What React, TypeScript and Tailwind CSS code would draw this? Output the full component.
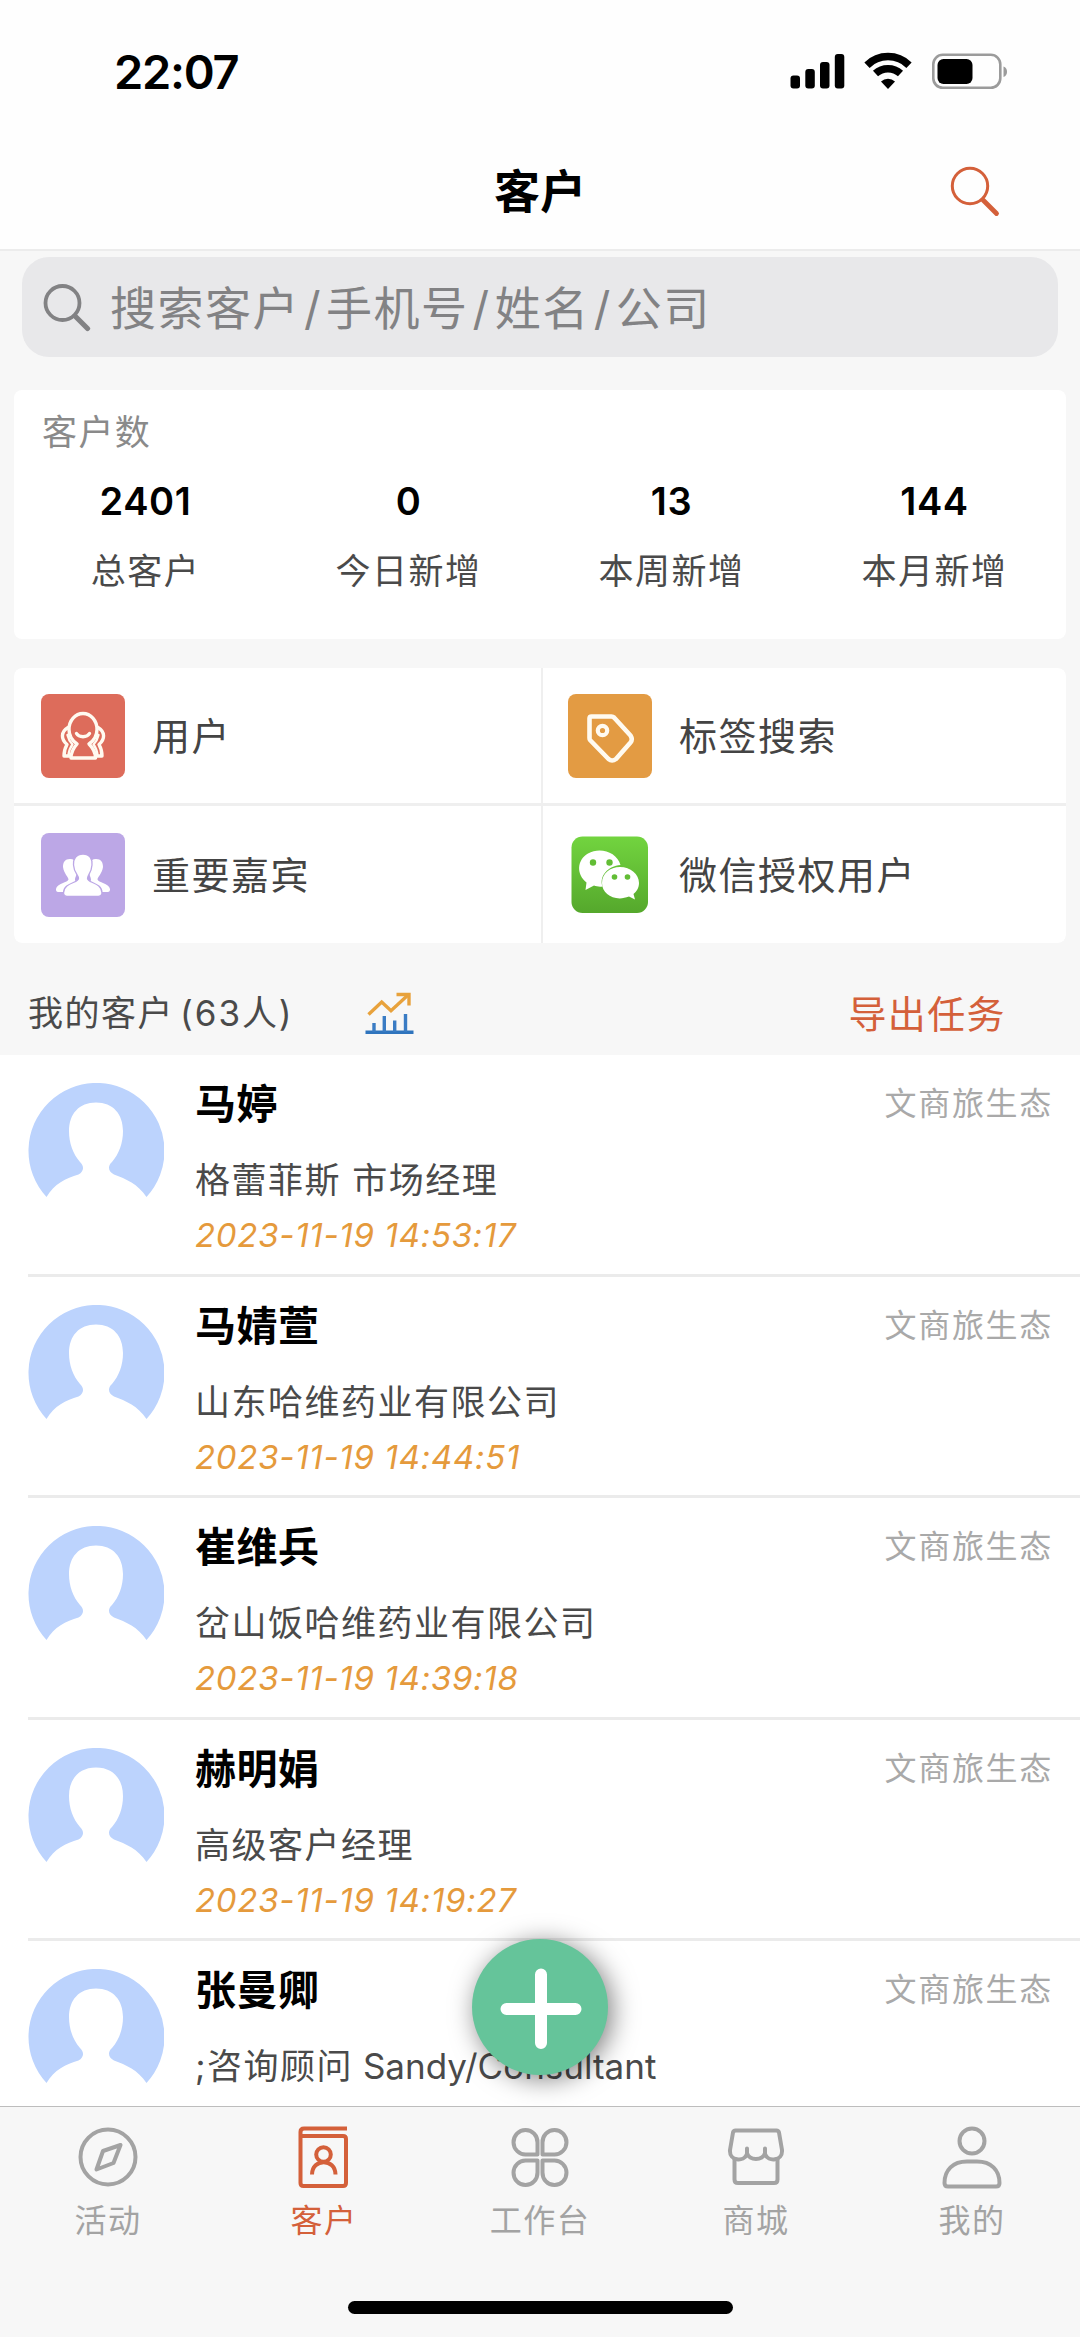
import React, { FC, ReactNode } from 'react';

interface Customer {
  name: string;
  info: string;
  latin?: string;
  time: string;
  tag: string;
}

const stats = [
  { value: '2401', label: '总客户' },
  { value: '0', label: '今日新增' },
  { value: '13', label: '本周新增' },
  { value: '144', label: '本月新增' },
];

const customers: Customer[] = [
  { name: '马婷', info: '格蕾菲斯 市场经理', time: '2023-11-19 14:53:17', tag: '文商旅生态' },
  { name: '马婧萱', info: '山东哈维药业有限公司', time: '2023-11-19 14:44:51', tag: '文商旅生态' },
  { name: '崔维兵', info: '岔山饭哈维药业有限公司', time: '2023-11-19 14:39:18', tag: '文商旅生态' },
  { name: '赫明娟', info: '高级客户经理', time: '2023-11-19 14:19:27', tag: '文商旅生态' },
  { name: '张曼卿', info: ';咨询顾问', latin: ' Sandy/Consultant', time: '', tag: '文商旅生态' },
];

const StatusBar: FC = () => (
  <div className="flex h-[142px] shrink-0 items-start justify-between pr-[71px] pl-[114px]">
    <span className="mt-[42px] text-[47px] leading-[60px] font-semibold tracking-[-1.3px] text-black">22:07</span>
    <svg className="mt-[52px]" width="220" height="40" viewBox="0 0 220 40">
      <g transform="translate(1.5 2)">
        <rect x="0" y="21.5" width="9.5" height="13" rx="3" />
        <rect x="14.8" y="15" width="9.5" height="19.5" rx="3" />
        <rect x="29.5" y="8" width="9.5" height="26.5" rx="3" />
        <rect x="44.3" y="0" width="9.5" height="34.5" rx="3" />
      </g>
      <g fill="none" stroke="#000" strokeWidth="7.5">
        <path d="M78 13.2 A30 30 0 0 1 120 13.2" />
        <path d="M86.5 21.6 A18.5 18.5 0 0 1 111.5 21.6" />
      </g>
      <path d="M99 37 L92 29.5 A10.5 10.5 0 0 1 106 29.5 Z" />
      <rect x="144.3" y="2.8" width="67" height="33" rx="9.5" fill="none" stroke="#9b9b9b" strokeWidth="2.6" />
      <rect x="148.5" y="7" width="35" height="25" rx="6" />
      <path d="M214.5 14.5 C219.2 16 219.2 23.5 214.5 25 Z" fill="#9b9b9b" />
    </svg>
  </div>
);

const NavBar: FC = () => (
  <div className="relative flex h-[109px] shrink-0 items-center justify-center border-b-2 border-[#ececec]">
    <h1 className="-mt-[10px] text-[46px] leading-none font-bold text-black">客户</h1>
    <svg className="absolute top-[22px] left-[949px]" width="54" height="54" viewBox="0 0 54 54" fill="none" stroke="#d4603a">
      <circle cx="21" cy="22" r="17.7" strokeWidth="3" />
      <path d="M34 36 L47.5 49.5" strokeWidth="4.8" strokeLinecap="round" />
    </svg>
  </div>
);

const SearchBox: FC = () => (
  <div className="mx-[22px] mt-[6px] flex h-[100px] shrink-0 items-center rounded-[27px] bg-[#e8e8ea] pl-[21px] text-[#828284]">
    <svg width="50" height="50" viewBox="0 0 50 50" fill="none" stroke="#828284">
      <circle cx="19.5" cy="21" r="17" strokeWidth="3.8" />
      <path d="M32 34 L44.5 46.5" strokeWidth="5.2" strokeLinecap="round" />
    </svg>
    <span className="mt-[2px] ml-[17px] text-[46px] leading-none tracking-[1.5px]">
      搜索客户<i className="mx-[4px] not-italic">/</i>手机号<i className="mx-[4px] not-italic">/</i>姓名
      <i className="mx-[4px] not-italic">/</i>公司
    </span>
  </div>
);

const StatsCard: FC = () => (
  <div className="mx-[14px] mt-[33px] h-[249px] shrink-0 rounded-[8px] bg-white">
    <div className="pt-[18px] pl-[28px] text-[35px] leading-[48px] tracking-[1.4px] text-[#8a8a8a]">客户数</div>
    <div className="grid grid-cols-4 text-center">
      {stats.map((s) => (
        <div key={s.label} className="flex flex-col">
          <span className="mt-[21px] text-[38px] leading-[48px] font-semibold tracking-[0.6px] text-black">{s.value}</span>
          <span className="mt-[22px] text-[35px] leading-[48px] tracking-[1.5px] text-[#4a4a4a]">{s.label}</span>
        </div>
      ))}
    </div>
  </div>
);

const UserIcon: FC = () => (
  <svg width="84" height="84" viewBox="0 0 84 84" fill="none" stroke="#fffaf0" strokeWidth="3.4" strokeLinejoin="round" strokeLinecap="round">
    <rect width="84" height="84" rx="8" fill="#dd6c5b" stroke="none" />
    <path d="M36 50 C31 46.5 28 42 28 35.5 A14 16 0 0 1 56 35.5 C56 42 53 46.5 48 50 C52 54 54.5 59 54.5 64 H30 C30 59 32.5 54 36 50" />
    <path d="M35.5 39.5 C38 43.8 46 43.8 48.5 39.5" />
    <path d="M27 33.5 C19.5 38 20 45.5 26 50.5 C24 54 23 58 23 62 H29" />
    <path d="M57 33.5 C64.5 38 64 45.5 58 50.5 C60 54 61 58 61 62 H55" />
    <path d="M26.5 41 C27.5 45.5 29.5 48.5 31.5 50.5 C29.5 53 28 57 27.5 61 M57.5 41 C56.5 45.5 54.5 48.5 52.5 50.5 C54.5 53 56 57 56.5 61" strokeWidth="2.4" />
  </svg>
);

const TagIcon: FC = () => (
  <svg width="84" height="84" viewBox="0 0 84 84" fill="none" stroke="#fffaf0" strokeWidth="4.6" strokeLinejoin="round">
    <rect width="84" height="84" rx="8" fill="#e39b43" stroke="none" />
    <path d="M23.5 22.5 H43.5 Q45 22.5 46 23.5 L62.5 41.5 Q65 45.5 62.5 48.5 L48 65 Q44 68 40.5 65 L22 46 Q21.5 45.5 21.5 44 V24.5 Q21.5 22.5 23.5 22.5 Z" />
    <circle cx="34.5" cy="36.5" r="4.7" strokeWidth="4.2" />
  </svg>
);

const GuestIcon: FC = () => (
  <svg width="84" height="84" viewBox="0 0 84 84" fill="#fff">
    <rect width="84" height="84" rx="8" fill="#bca7e6" />
    <path d="M29 26 C36 26 37 33 36 39 C35.5 43 34 44 34 47 C34 50 46 51 46 59 H18 C15 59 15 57.5 15 56 C16 50 27 49.5 27.5 46.5 C27.5 44 23 41 22 34 C22 29 24 26 29 26 Z" />
    <path d="M55 26 C48 26 47 33 48 39 C48.5 43 50 44 50 47 C50 50 38 51 38 59 H66 C69 59 69 57.5 69 56 C68 50 57 49.5 56.5 46.5 C56.5 44 61 41 62 34 C62 29 60 26 55 26 Z" />
    <path d="M42 21 C49 21 51.5 26.5 51 32 C50.5 40 46.5 42 46.5 45.5 C46.5 50 61 49.5 61 60 C61 63 58 63.5 55 63.5 H28 C25 63.5 22.5 63 22.5 60 C22.5 49.5 37.5 50 37.5 45.5 C37.5 42 33 40 32.5 32 C32 26.5 35 21 42 21 Z" stroke="#bca7e6" strokeWidth="1.3" />
  </svg>
);

const WechatIcon: FC = () => (
  <svg width="84" height="84" viewBox="0 0 84 84">
    <defs>
      <linearGradient id="wechat" x1="0" y1="0" x2="0" y2="1">
        <stop offset="0" stopColor="#72d43f" />
        <stop offset="1" stopColor="#55a82c" />
      </linearGradient>
    </defs>
    <rect x="3.5" y="3.5" width="76.5" height="76.5" rx="11" fill="url(#wechat)" />
    <path d="M18.5 49.5 C8 41 9 27 20 20.5 C32 13.5 49 19 52.5 32 C40 33 31 43 34.5 53.5 C31 54 28.5 53.3 26 52.5 L17.5 57 Z" fill="#fff" />
    <path d="M34 50 C34 40.5 42 34 52 34 C62.5 34 71 41 71 50 C71 55 68.5 58.5 65.5 61 L67 66.5 L61 63.6 C47 69 34 61.5 34 50 Z" fill="#fff" />
    <g fill="#62bd35">
      <circle cx="25" cy="29.5" r="3.2" />
      <circle cx="41.5" cy="29.5" r="3.2" />
      <circle cx="46.5" cy="44" r="2.8" />
      <circle cx="59.5" cy="44" r="2.8" />
    </g>
  </svg>
);

const MenuItem: FC<{ icon: ReactNode; label: string }> = ({ icon, label }) => (
  <div className="flex items-center bg-white pt-px pl-[25px] text-[38px] leading-none tracking-[1.5px] text-[#444] odd:pl-[27px]">
    {icon}
    <span className="ml-[27px]">{label}</span>
  </div>
);

const MenuGrid: FC = () => (
  <div className="mx-[14px] mt-[29px] grid h-[275px] shrink-0 grid-cols-[527px_523px] grid-rows-[135px_137px] gap-x-[2px] gap-y-[3px] overflow-hidden rounded-[8px] bg-[#efefef]">
    <MenuItem icon={<UserIcon />} label="用户" />
    <MenuItem icon={<TagIcon />} label="标签搜索" />
    <MenuItem icon={<GuestIcon />} label="重要嘉宾" />
    <MenuItem icon={<WechatIcon />} label="微信授权用户" />
  </div>
);

const ListHeader: FC = () => (
  <div className="flex h-[112px] shrink-0 items-center pt-[29px] pr-[74px] pl-[28px]">
    <span className="w-[337px] text-[35px] leading-none tracking-[1.5px] text-[#4a4a4a]">
      我的客户<i className="ml-[6px] tracking-[2px] not-italic">(63</i>人<i className="not-italic">)</i>
    </span>
    <svg width="50" height="44" viewBox="0 0 50 44" fill="none" strokeWidth="3.4">
      <path d="M3.5 22.5 L16.7 10 L26 18.7 L42.5 3.5" stroke="#e8a23c" />
      <path d="M31.5 2.5 H44 V13.5" stroke="#e8a23c" />
      <path d="M0.5 40.3 H48.5" stroke="#2f74bd" />
      <path d="M9 31 V40 M19.3 24 V40 M29.7 28.5 V40 M40.5 22 V40" stroke="#3a7cc4" />
    </svg>
    <span className="ml-auto text-[38px] leading-none tracking-[1.4px] text-[#d4603a]">导出任务</span>
  </div>
);

const Avatar: FC = () => (
  <svg className="mt-[28px] shrink-0" width="136" height="136" viewBox="0 0 136 136">
    <path
      fill="#bcd3fd"
      d="M18.5 114 A68 68 0 1 1 118.5 114 C110 101 98 96 86 91.5 C80 88.5 79.5 83 84 79 C91 71 95 60 95 48 C95 31 85 19.5 68 19.5 C51 19.5 41 31 41 48 C41 60 45 71 52 79 C56.5 83 56 88.5 50.5 91.5 C38 95 26 101 18.5 114 Z"
    />
  </svg>
);

const CustomerRow: FC<{ customer: Customer }> = ({ customer }) => (
  <div className="ml-[28px] flex h-[221.5px] shrink-0 border-b-3 border-[#ebebeb]">
    <Avatar />
    <div className="ml-[31px] flex flex-col">
      <span className="mt-[21px] text-[41px] leading-[56px] font-bold tracking-[0.5px] text-black">{customer.name}</span>
      <span className="mt-[24px] text-[35px] leading-[48px] tracking-[1.5px] whitespace-nowrap text-[#4a4a4a]">
        {customer.info}
        {customer.latin && <i className="tracking-normal not-italic">{customer.latin}</i>}
      </span>
      <span className="mt-[9px] text-[33px] leading-[44px] tracking-[0.7px] text-[#e59a3c] italic">{customer.time}</span>
    </div>
    <span className="mt-[27px] mr-[27px] ml-auto text-[32px] leading-[44px] tracking-[1.7px] text-[#a9a9a9]">{customer.tag}</span>
  </div>
);

const tabs: { label: string; active?: boolean; icon: ReactNode }[] = [
  {
    label: '活动',
    icon: (
      <>
        <circle cx="32" cy="32" r="27.5" />
        <path d="M44.5 20 L37.5 38 L20.5 44.5 L27 26 Z" />
      </>
    ),
  },
  {
    label: '客户',
    active: true,
    icon: (
      <>
        <path d="M55 3.5 H12 Q8.5 3.5 8.5 7 V58 Q8.5 61 11.5 61 H51 Q54 61 54 58 V14 Q54 11 51 11 H9" />
        <circle cx="31.5" cy="29.5" r="7.3" />
        <path d="M20 49.5 C20 33 43.5 33 43.5 49.5" />
      </>
    ),
  },
  {
    label: '工作台',
    icon: (
      <>
        <path d="M29.5 29.5 H18 A12 12.3 0 1 1 29.5 17.5 Z" />
        <path d="M34.5 29.5 H46 A12 12.3 0 1 0 34.5 17.5 Z" />
        <path d="M29.5 35.5 H18 A12 12.3 0 1 0 29.5 47.5 Z" />
        <path d="M34.5 35.5 H46 A12 12.3 0 1 1 34.5 47.5 Z" />
      </>
    ),
  },
  {
    label: '商城',
    icon: (
      <>
        <path d="M11.5 5.5 H52.5 Q54.5 5.5 55 7.5 L58 25 C59 36 44 37.5 41 29 V23.5 V28 C39 36 25 36 23 28 V23.5 V29 C20 37.5 5 36 6 25 L9 7.5 Q9.5 5.5 11.5 5.5 Z" />
        <path d="M10.5 34 V54.5 Q10.5 58 14 58 H50 Q53.5 58 53.5 54.5 V34" />
      </>
    ),
  },
  {
    label: '我的',
    icon: (
      <>
        <circle cx="32" cy="16" r="12.5" />
        <path d="M27 36.5 H37 C51 36.5 59.5 45 59.5 58 Q59.5 61.5 56 61.5 H8 Q4.5 61.5 4.5 58 C4.5 45 13 36.5 27 36.5 Z" />
      </>
    ),
  },
];

const TabBar: FC = () => (
  <div className="mt-auto flex h-[231px] shrink-0 flex-col items-center border-t border-[#bdbdbd] bg-[#f7f7f7]">
    <div className="grid w-full grid-cols-5">
      {tabs.map((tab) => (
        <div
          key={tab.label}
          className={tab.active ? 'flex flex-col items-center text-[#d4603a]' : 'flex flex-col items-center text-[#a3a3a3]'}
        >
          <svg className="mt-[18px]" width="64" height="64" viewBox="0 0 64 64" fill="none" stroke="currentColor" strokeWidth="4" strokeLinejoin="round">
            {tab.icon}
          </svg>
          <span className="mt-[10px] text-[32px] leading-[44px] tracking-[1.5px]">{tab.label}</span>
        </div>
      ))}
    </div>
    <div className="mt-auto mb-[23px] h-[13px] w-[385px] rounded-full bg-black" />
  </div>
);

const AddButton: FC = () => (
  <button className="absolute top-[1939px] left-[472px] flex size-[136px] items-center justify-center rounded-full bg-[#65c49a] shadow-[4px_4px_26px_rgba(0,0,0,0.5)]">
    <svg width="84" height="84" viewBox="0 0 84 84" stroke="#fff" strokeWidth="12" strokeLinecap="round">
      <path d="M43 9.5 V78 M8.5 44 H77.5" />
    </svg>
  </button>
);

const App: FC = () => {
  return (
    <div className="relative flex h-[2337px] w-[1080px] flex-col overflow-hidden bg-[#f7f7f7] font-['Inter','Noto_Sans_CJK_SC',sans-serif]">
      <div className="flex shrink-0 flex-col bg-[#fefefe]">
        <StatusBar />
        <NavBar />
      </div>
      <SearchBox />
      <StatsCard />
      <MenuGrid />
      <ListHeader />
      <div className="flex h-[1051px] shrink-0 flex-col overflow-hidden bg-white">
        {customers.map((c) => (
          <CustomerRow key={c.name} customer={c} />
        ))}
      </div>
      <TabBar />
      <AddButton />
    </div>
  );
};

export default App;
